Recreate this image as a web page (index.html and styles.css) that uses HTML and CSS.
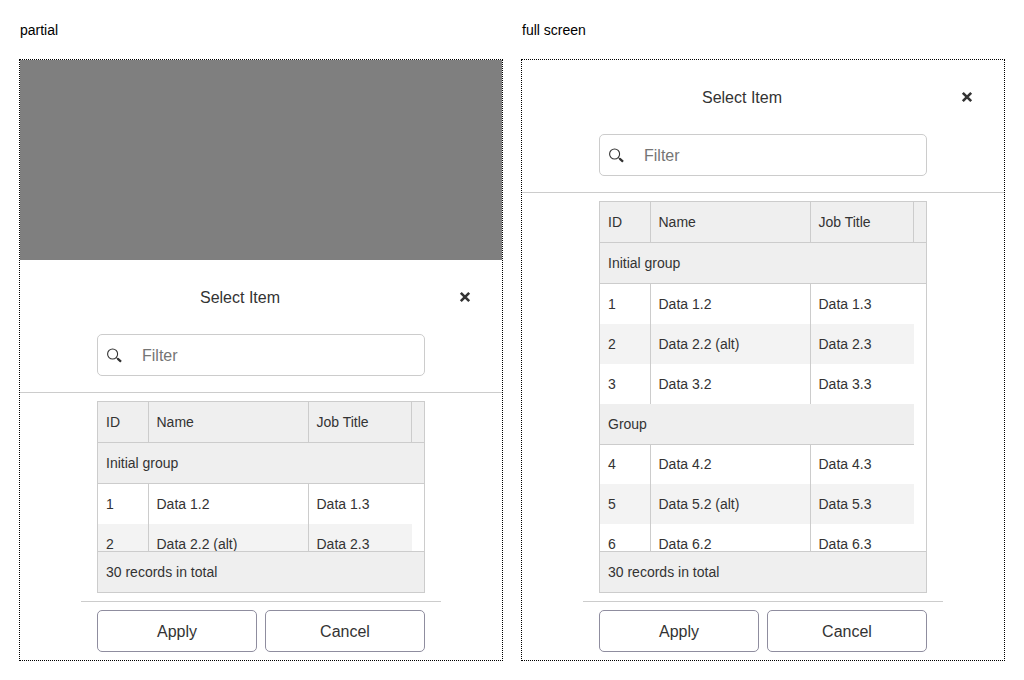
FILE: index.html
```html
<!DOCTYPE html>
<html lang="en">
<head>
<meta charset="utf-8">
<title>Select Item</title>
<link rel="stylesheet" href="styles.css">
</head>
<body>
<main class="page">
  <section class="demo">
    <h2 class="demo-label">partial</h2>
    <div class="frame">
      <div class="backdrop"></div>
      <div class="dialog">
        <header class="dialog-head">
          <h1 class="dialog-title">Select Item</h1>
          <button class="close" aria-label="Close"><svg width="12" height="12" viewBox="0 0 12 12"><path d="M1.8 1.8 10.2 10.2M10.2 1.8 1.8 10.2" fill="none" stroke="#333" stroke-width="2.6"/></svg></button>
        </header>
        <div class="filter-bar">
          <div class="filter">
            <svg class="search" width="16" height="16" viewBox="0 0 16 16"><circle cx="5.6" cy="6" r="5" fill="none" stroke="#333" stroke-width="1.1"/><path d="M9.4 9.6 14 13.6" fill="none" stroke="#333" stroke-width="1.1"/><path d="M10.6 10.6 14 13.6" fill="none" stroke="#333" stroke-width="2.2"/></svg>
            <input class="filter-input" placeholder="Filter">
          </div>
        </div>
        <div class="content">
          <div class="grid">
            <div class="row head"><div class="c1">ID</div><div class="c2">Name</div><div class="c3">Job Title</div><div class="c4"></div></div>
            <div class="group sticky">Initial group</div>
            <div class="body">
              <div class="row"><div class="c1">1</div><div class="c2">Data 1.2</div><div class="c3">Data 1.3</div></div>
              <div class="row alt"><div class="c1">2</div><div class="c2">Data 2.2 (alt)</div><div class="c3">Data 2.3</div></div>
              <div class="row"><div class="c1">3</div><div class="c2">Data 3.2</div><div class="c3">Data 3.3</div></div>
            </div>
            <div class="grid-foot">30 records in total</div>
          </div>
        </div>
        <footer class="actions">
          <button class="btn">Apply</button>
          <button class="btn">Cancel</button>
        </footer>
      </div>
    </div>
  </section>
  <section class="demo">
    <h2 class="demo-label">full screen</h2>
    <div class="frame">
      <div class="dialog">
        <header class="dialog-head">
          <h1 class="dialog-title">Select Item</h1>
          <button class="close" aria-label="Close"><svg width="12" height="12" viewBox="0 0 12 12"><path d="M1.8 1.8 10.2 10.2M10.2 1.8 1.8 10.2" fill="none" stroke="#333" stroke-width="2.6"/></svg></button>
        </header>
        <div class="filter-bar">
          <div class="filter">
            <svg class="search" width="16" height="16" viewBox="0 0 16 16"><circle cx="5.6" cy="6" r="5" fill="none" stroke="#333" stroke-width="1.1"/><path d="M9.4 9.6 14 13.6" fill="none" stroke="#333" stroke-width="1.1"/><path d="M10.6 10.6 14 13.6" fill="none" stroke="#333" stroke-width="2.2"/></svg>
            <input class="filter-input" placeholder="Filter">
          </div>
        </div>
        <div class="content">
          <div class="grid">
            <div class="row head"><div class="c1">ID</div><div class="c2">Name</div><div class="c3">Job Title</div><div class="c4"></div></div>
            <div class="group sticky">Initial group</div>
            <div class="body">
              <div class="row"><div class="c1">1</div><div class="c2">Data 1.2</div><div class="c3">Data 1.3</div></div>
              <div class="row alt"><div class="c1">2</div><div class="c2">Data 2.2 (alt)</div><div class="c3">Data 2.3</div></div>
              <div class="row"><div class="c1">3</div><div class="c2">Data 3.2</div><div class="c3">Data 3.3</div></div>
              <div class="group inline">Group</div>
              <div class="row"><div class="c1">4</div><div class="c2">Data 4.2</div><div class="c3">Data 4.3</div></div>
              <div class="row alt"><div class="c1">5</div><div class="c2">Data 5.2 (alt)</div><div class="c3">Data 5.3</div></div>
              <div class="row"><div class="c1">6</div><div class="c2">Data 6.2</div><div class="c3">Data 6.3</div></div>
              <div class="row alt"><div class="c1">7</div><div class="c2">Data 7.2 (alt)</div><div class="c3">Data 7.3</div></div>
            </div>
            <div class="grid-foot">30 records in total</div>
          </div>
        </div>
        <footer class="actions">
          <button class="btn">Apply</button>
          <button class="btn">Cancel</button>
        </footer>
      </div>
    </div>
  </section>
</main>
</body>
</html>
```
FILE: styles.css
```css
* { box-sizing: border-box; }
html, body { margin: 0; padding: 0; background: #fff; }
body { font-family: "Liberation Sans", Arial, sans-serif; font-size: 14px; color: #333; }
.page { display: grid; grid-template-columns: 482px 482px; column-gap: 20px; padding: 20px; }
.demo { display: flex; flex-direction: column; }
.demo-label { margin: 0 0 20px; font-size: 14px; font-weight: 400; line-height: 20px; color: #000; }
.frame { display: flex; flex-direction: column; height: 600px; outline: 1px dotted #000; }
.backdrop { flex: 0 0 200px; background: #7f7f7f; }
.dialog { flex: 1; min-height: 0; display: flex; flex-direction: column; background: #fff; }
.dialog-head { flex: 0 0 74px; display: flex; align-items: center; }
.dialog-title { width: 440px; margin: 0; padding-top: 2px; font-size: 16px; font-weight: 400; text-align: center; color: #333; }
.close { width: 10px; height: 12px; padding: 0; border: 0; background: none; display: flex; justify-content: center; align-items: center; overflow: visible; }
.close svg { flex: none; display: block; }
.filter-bar { flex: none; padding-bottom: 16px; border-bottom: 1px solid #ccc; display: flex; justify-content: center; }
.filter { position: relative; width: 328px; height: 42px; }
.search { position: absolute; left: 10px; top: 14px; }
.filter-input { display: block; width: 100%; height: 100%; padding: 2px 8px 0 44px; border: 1px solid #ccc; border-radius: 5px; background: #fff; font: 16px "Liberation Sans", Arial, sans-serif; color: #333; outline: none; }
.filter-input::placeholder { color: #757575; opacity: 1; }
.content { flex: 1; min-height: 0; padding: 8px 0; display: flex; justify-content: center; }
.grid { width: 328px; display: flex; flex-direction: column; border: 1px solid #ccc; }
.row { display: flex; height: 40px; line-height: 40px; }
.row > div { padding-left: 8px; }
.c1 { width: 50.5px; border-right: 1px solid #ccc; }
.c2 { width: 160px; border-right: 1px solid #ccc; }
.c3 { width: 103.5px; }
.row.head { flex: none; height: 41px; background: #efefef; border-bottom: 1px solid #ccc; }
.row.head .c3 { border-right: 1px solid #ccc; }
.c4 { flex: 1; }
.alt { background: #f3f3f3; }
.group { background: #efefef; border-bottom: 1px solid #ccc; padding-left: 8px; height: 41px; line-height: 40px; }
.group.sticky { flex: none; }
.group.inline { height: 41px; line-height: 40px; margin-bottom: -1px; }
.body { flex: 1; min-height: 0; overflow: hidden; width: 314px; }
.grid-foot { flex: none; height: 41px; line-height: 40px; padding-left: 8px; background: #efefef; border-top: 1px solid #ccc; }
.actions { flex: none; width: 360px; margin: 0 auto; padding: 8px 16px; border-top: 1px solid #ccc; display: flex; gap: 8px; }
.btn { flex: 1; height: 42px; border: 1px solid #8f8d9f; border-radius: 5px; background: #fff; font: 16px "Liberation Sans", Arial, sans-serif; color: #333; padding: 2px 0 0; }
```
